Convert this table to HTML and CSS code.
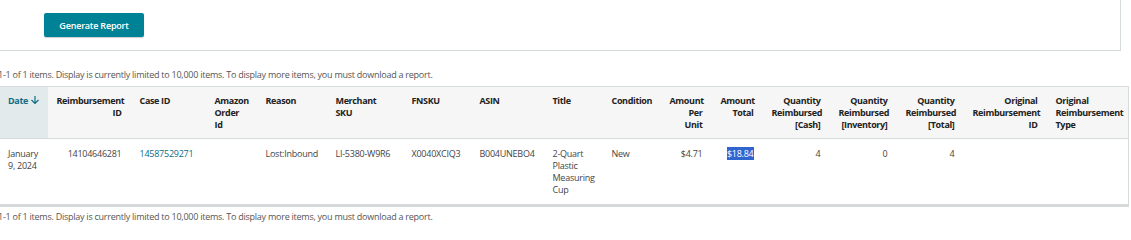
FILE: index.html
```html
<!DOCTYPE html>
<html lang="en">
<head>
    <meta charset="UTF-8">
    <title>Reimbursements</title>
    <link rel="stylesheet" href="styles.css">
</head>
<body>
    <div class="panel">
        <button class="btn-primary">Generate Report</button>
    </div>

    <p class="summary">1-1 of 1 items. Display is currently limited to 10,000 items. To display more items, you must download a report.</p>

    <table class="report">
        <colgroup>
            <col style="width:48px">
            <col style="width:83px">
            <col style="width:75px">
            <col style="width:51px">
            <col style="width:70px">
            <col style="width:76px">
            <col style="width:68px">
            <col style="width:73px">
            <col style="width:59px">
            <col style="width:58px">
            <col style="width:51px">
            <col style="width:51px">
            <col style="width:67px">
            <col style="width:67px">
            <col style="width:67px">
            <col style="width:83px">
            <col>
        </colgroup>
        <thead>
            <tr>
                <th class="sorted">Date
                    <svg class="sort-icon" width="10" height="10" viewBox="0 0 10 10"><path d="M5 1v7.5M1.5 5L5 8.5 8.5 5" fill="none" stroke="currentColor" stroke-width="1.2"/></svg>
                </th>
                <th class="num">Reimbursement ID</th>
                <th>Case ID</th>
                <th>Amazon Order Id</th>
                <th>Reason</th>
                <th>Merchant SKU</th>
                <th>FNSKU</th>
                <th>ASIN</th>
                <th>Title</th>
                <th>Condition</th>
                <th class="num">Amount Per Unit</th>
                <th class="num">Amount Total</th>
                <th class="num">Quantity Reimbursed [Cash]</th>
                <th class="num">Quantity Reimbursed [Inventory]</th>
                <th class="num">Quantity Reimbursed [Total]</th>
                <th class="num">Original Reimbursement ID</th>
                <th>Original Reimbursement Type</th>
            </tr>
        </thead>
        <tbody>
            <tr>
                <td class="date">January 9, 2024</td>
                <td class="num">14104646281</td>
                <td><a href="#" class="link">14587529271</a></td>
                <td></td>
                <td>Lost:Inbound</td>
                <td>LI-5380-W9R6</td>
                <td>X0040XCIQ3</td>
                <td>B004UNEBO4</td>
                <td>2-Quart Plastic Measuring Cup</td>
                <td>New</td>
                <td class="num">$4.71</td>
                <td class="num"><span class="selected">$18.84</span></td>
                <td class="num">4</td>
                <td class="num">0</td>
                <td class="num">4</td>
                <td class="num"></td>
                <td></td>
            </tr>
        </tbody>
    </table>

    <p class="summary summary-bottom">1-1 of 1 items. Display is currently limited to 10,000 items. To display more items, you must download a report.</p>
</body>
</html>
```

FILE: styles.css
```css
body {
    margin: 0;
    font-family: 'Open Sans', 'Noto Sans', sans-serif;
    font-size: 9px;
    letter-spacing: -0.25px;
    color: #333;
    background: #fff;
    overflow: hidden;
}
.panel {
    margin: -1px 10px 0 -1px;
    padding: 13px 0 13px 44px;
    border: 1px solid #d5dbdb;
}
.btn-primary {
    display: block;
    width: 100px;
    height: 24px;
    border: none;
    border-radius: 2px;
    background-color: #008296;
    color: #fff;
    font-family: inherit;
    font-size: 9px;
    font-weight: 600;
    letter-spacing: -0.2px;
    box-shadow: 0 1px 1px rgba(0, 0, 0, 0.2);
}
.summary {
    margin: 18px 0 0 -2px;
    line-height: 12px;
    color: #555;
}
.summary-bottom {
    margin-top: 6px;
}
.report {
    margin: 5px 0 0 -1px;
    width: 1130px;
    table-layout: fixed;
    border-collapse: collapse;
    border: 1px solid #d5dbdb;
    box-shadow: 0 2px 0 #d5d9d9;
}
.report th,
.report td {
    padding: 0 9px;
    text-align: left;
    vertical-align: top;
    line-height: 12px;
}
.report th {
    padding-top: 8px;
    padding-bottom: 7px;
    height: 36px;
    background: #f6f6f6;
    color: #222;
    font-weight: 700;
    letter-spacing: -0.35px;
    border-bottom: 1px solid #d5dbdb;
}
.report td {
    padding-top: 9px;
    padding-bottom: 8px;
    height: 48px;
    color: #444;
}
.report .num {
    text-align: right;
}
.report th.sorted {
    background: #e3eaec;
    color: #0f6e84;
    padding-left: 8px;
    padding-right: 0;
    white-space: nowrap;
}
.report td.date {
    padding-left: 8px;
    padding-right: 2px;
}
.sort-icon {
    vertical-align: -1px;
}
.link {
    color: #0b6d86;
    text-decoration: none;
}
.selected {
    background: #3065d0;
    color: #fff;
}
```
